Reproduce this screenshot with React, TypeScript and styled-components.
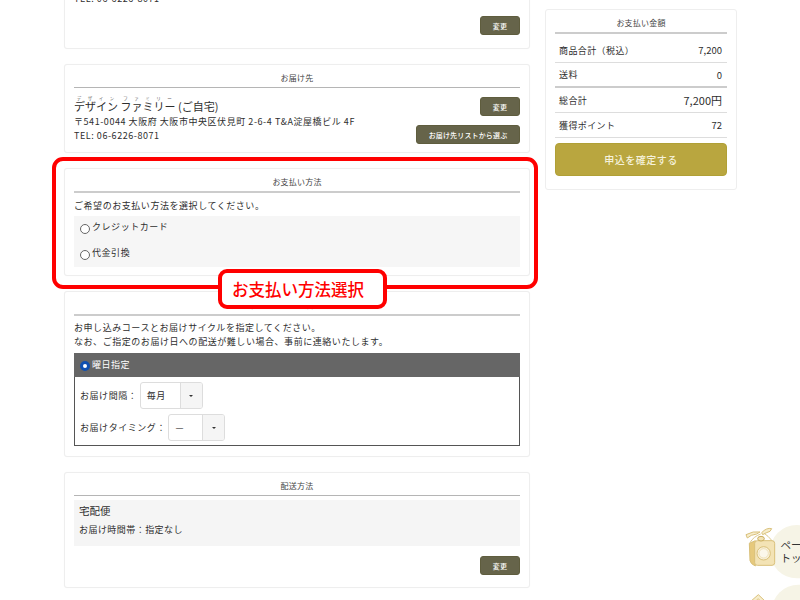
import React from "react";
import styled, { createGlobalStyle } from "styled-components";

const Global = createGlobalStyle`
  html, body { margin: 0; padding: 0; background: #fff; }
  body { font-family: "Noto Sans CJK JP", "Noto Sans", sans-serif; color: #333; overflow: hidden; }
`;

const Page = styled.div`
  position: relative;
  width: 800px;
  height: 600px;
  overflow: hidden;
`;

const Layout = styled.div`
  display: flex;
  align-items: flex-start;
  gap: 15px;
  padding-left: 64px;
  margin-top: -60px;
`;

const MainColumn = styled.div`
  width: 466px;
  display: flex;
  flex-direction: column;
  gap: 15px;
`;

const SideColumn = styled.div`
  width: 192px;
  margin-top: 69px;
`;

const Card = styled.section<{ $h: number; $raised?: boolean }>`
  position: relative;
  z-index: ${(p) => (p.$raised ? 2 : 1)};
  box-sizing: border-box;
  height: ${(p) => p.$h}px;
  padding: 0 9px;
  background: #fff;
  border: 1px solid #eee;
  border-radius: 3px;
  box-shadow: 0 0 1px rgba(0, 0, 0, 0.05);
`;

const CardTitle = styled.h2<{ $thin?: boolean }>`
  margin: 0 0 4px;
  height: 22px;
  line-height: 26px;
  font-size: 8px;
  font-weight: 400;
  letter-spacing: 0.2px;
  text-align: center;
  color: #444;
  border-bottom: ${(p) => (p.$thin ? "1px solid #b5b5b5" : "2px solid #ccc")};
`;

const Text = styled.p`
  margin: 0;
  font-size: 9px;
  line-height: 14px;
  letter-spacing: 0.55px;
  color: #2e2e2e;
`;

const Btn = styled.button<{ $wide?: boolean }>`
  display: block;
  width: ${(p) => (p.$wide ? 104 : 40)}px;
  height: 19px;
  padding: 0;
  border: 1px solid #5f5d3e;
  border-radius: 3px;
  background: #66644a;
  color: #fff;
  font-family: inherit;
  font-size: 7px;
  font-weight: 500;
  letter-spacing: 0.15px;
  white-space: nowrap;
`;

const BtnRow = styled.div`
  display: flex;
  justify-content: flex-end;
`;

const Spacer = styled.div<{ $h: number }>`
  height: ${(p) => p.$h}px;
`;

const AddressRow = styled.div`
  display: flex;
  justify-content: space-between;
`;

const Name = styled.div`
  font-size: 11px;
  line-height: 13px;
  margin: 4px 0 2px;
  color: #2e2e2e;
  ruby { ruby-position: over; }
  rt { font-size: 4.5px; letter-spacing: 1.1px; color: #666; }
`;

const AddressBtns = styled.div`
  display: flex;
  flex-direction: column;
  align-items: flex-end;
  gap: 9px;
  padding-top: 5px;
`;

const OptionBox = styled.div`
  margin-top: 3px;
  height: 51px;
  background: #f6f6f6;
`;

const Option = styled.label`
  display: flex;
  align-items: flex-start;
  gap: 2px;
  height: 26px;
  padding-left: 6px;
  font-size: 9px;
  line-height: 22px;
  letter-spacing: 0.55px;
  color: #2e2e2e;
`;

const Radio = styled.span`
  display: block;
  box-sizing: border-box;
  width: 10px;
  height: 10px;
  margin-top: 8px;
  border: 1px solid #666;
  border-radius: 50%;
  background: #fff;
`;

const RadioOn = styled.span`
  display: block;
  box-sizing: border-box;
  width: 10px;
  height: 10px;
  margin-top: 3px;
  border: 3px solid #0f4fb0;
  border-radius: 50%;
  background: #fff;
`;

const CycleBox = styled.div`
  margin-top: 4px;
  height: 93px;
  box-sizing: border-box;
  border: 1px solid #555;
  border-width: 0 1px 1px;
`;

const CycleHead = styled.div`
  display: flex;
  align-items: center;
  gap: 2px;
  box-sizing: border-box;
  height: 24px;
  margin: 0 -1px;
  padding: 0 0 1px 6px;
  background: #666;
  color: #fff;
  font-size: 9px;
  letter-spacing: 0.5px;
`;

const FieldRow = styled.div`
  display: flex;
  align-items: center;
  height: 27px;
  padding-left: 5px;
  margin-top: 5px;
  font-size: 9px;
  letter-spacing: 0.55px;
  color: #2e2e2e;
`;

const Select = styled.div<{ $w: number }>`
  box-sizing: border-box;
  width: ${(p) => p.$w}px;
  height: 27px;
  margin-left: 2.5px;
  display: flex;
  border: 1px solid #ddd;
  border-radius: 3px;
  overflow: hidden;
  background: #fff;
  font-size: 9px;
  line-height: 25px;
`;

const SelectValue = styled.span`
  flex: 1;
  padding-left: 6px;
`;

const SelectArrow = styled.span`
  width: 21px;
  display: flex;
  align-items: center;
  justify-content: center;
  background: #f5f5f5;
  border-left: 1px solid #ddd;
  &::after {
    content: "";
    border: 2px solid transparent;
    border-top: 2.5px solid #333;
    border-bottom: 0;
  }
`;

const ShippingBox = styled.div`
  height: 46px;
  padding: 3px 5px 0;
  box-sizing: border-box;
  background: #f5f5f5;
`;

const ShippingName = styled.div`
  font-size: 10.5px;
  line-height: 15px;
  color: #2e2e2e;
`;

const ShippingNote = styled.div`
  margin-top: 5px;
  font-size: 9px;
  line-height: 14px;
  letter-spacing: 0.45px;
  color: #2e2e2e;
`;

const SideCard = styled.aside`
  box-sizing: border-box;
  height: 181px;
  padding: 0 9px;
  border: 1px solid #eee;
  border-radius: 3px;
  background: #fff;
`;

const SumRow = styled.div<{ $big?: boolean }>`
  display: flex;
  justify-content: space-between;
  align-items: center;
  height: 25px;
  box-sizing: border-box;
  padding: 0 5px 0 4px;
  border-bottom: ${(p) => (p.$big ? "2px solid #ccc" : "1px solid #ddd")};
  font-size: 9px;
  letter-spacing: 0.4px;
  color: #2e2e2e;
`;

const SumValue = styled.span<{ $big?: boolean }>`
  font-size: ${(p) => (p.$big ? 11 : 9.5)}px;
  letter-spacing: 0;
`;

const Confirm = styled.button`
  display: block;
  width: 172px;
  height: 33px;
  margin-top: 5px;
  padding: 0;
  border: 1px solid #b0a036;
  border-radius: 4px;
  background: #b9a63f;
  color: #f5f2dc;
  font-family: inherit;
  font-size: 10px;
  font-weight: 500;
  letter-spacing: 0.5px;
`;

const Highlight = styled.div`
  position: absolute;
  left: -13px;
  top: -12px;
  width: 486px;
  height: 132px;
  box-sizing: border-box;
  border: 4px solid #f00;
  border-radius: 11px;
  pointer-events: none;
`;

const HighlightLabel = styled.div`
  position: absolute;
  left: 153px;
  top: 100px;
  box-sizing: border-box;
  width: 169px;
  height: 40px;
  padding-right: 9px;
  border: 4px solid #f00;
  border-radius: 9px;
  background: #fff;
  color: #f00;
  font-size: 16.5px;
  font-weight: 500;
  line-height: 32px;
  text-align: center;
  white-space: nowrap;
`;

const FloatLink = styled.div<{ $top: number }>`
  position: absolute;
  left: 730px;
  top: ${(p) => p.$top}px;
  width: 70px;
  height: 90px;
`;

const FloatText = styled.div`
  position: absolute;
  left: 50.5px;
  top: 28px;
  font-size: 10.5px;
  line-height: 13px;
  color: #333;
  white-space: nowrap;
`;

const Bag = () => (
  <svg width="70" height="90" viewBox="0 0 210 270" fill="none">
    <circle cx="200" cy="125" r="80" fill="#f6f4e6" />
    <path d="M60 98 Q70 80 92 72 M126 92 Q115 78 100 68" stroke="#dcc98e" strokeWidth="3" />
    <path d="M48 74 Q70 62 90 66 L80 72 Q62 74 52 84 Z" fill="#f7edcb" stroke="#d9c07a" strokeWidth="3" />
    <path d="M95 68 Q110 52 125 56 L120 64 Q108 68 98 74 Z" fill="#f7edcb" stroke="#d9c07a" strokeWidth="3" />
    <path d="M58 100 L76 92 L76 168 Q62 162 60 152 Z" fill="#e6c97c" stroke="#d9c07a" strokeWidth="3" />
    <rect x="74" y="92" width="60" height="74" rx="8" fill="#f3e3b5" stroke="#d9c07a" strokeWidth="3" />
    <circle cx="101" cy="130" r="20" fill="#f9f1da" stroke="#d9c07a" strokeWidth="3" />
    <circle cx="101" cy="130" r="14" fill="#fbf7ea" stroke="#e8d8a8" strokeWidth="2" />
    <ellipse cx="93" cy="86" rx="10" ry="7" fill="#f3e3b5" stroke="#c9ad5e" strokeWidth="3" />
  </svg>
);

const House = () => (
  <svg width="70" height="90" viewBox="0 0 210 270" fill="none">
    <circle cx="205" cy="100" r="80" fill="#f6f4e6" />
    <path d="M60 72 L85 50 L108 72" fill="#f7edcb" stroke="#d9c07a" strokeWidth="3" />
    <path d="M70 75 L85 62 L98 75 Z" fill="#f3e3b5" stroke="#d9c07a" strokeWidth="2" />
  </svg>
);

export default function App() {
  return (
    <Page>
      <Global />
      <Layout>
        <MainColumn>
          <Card $h={109}>
            <Spacer $h={51} />
            <Text>TEL: 06-6226-8071</Text>
            <Spacer $h={10} />
            <BtnRow>
              <Btn>変更</Btn>
            </BtnRow>
          </Card>
          <Card $h={89}>
            <CardTitle $thin>お届け先</CardTitle>
            <AddressRow>
              <div>
                <Name>
                  <ruby>
                    デザイン<rt>デザイン</rt>
                  </ruby>{" "}
                  <ruby>
                    ファミリー<rt>ファミリー</rt>
                  </ruby>{" "}
                  (ご自宅)
                </Name>
                <Text>〒541-0044 大阪府 大阪市中央区伏見町 2-6-4 T&amp;A淀屋橋ビル 4F</Text>
                <Text>TEL: 06-6226-8071</Text>
              </div>
              <AddressBtns>
                <Btn>変更</Btn>
                <Btn $wide>お届け先リストから選ぶ</Btn>
              </AddressBtns>
            </AddressRow>
          </Card>
          <Card $h={108} $raised>
            <CardTitle>お支払い方法</CardTitle>
            <Spacer $h={2} />
            <Text>ご希望のお支払い方法を選択してください。</Text>
            <OptionBox>
              <Option>
                <Radio />
                クレジットカード
              </Option>
              <Option>
                <Radio />
                代金引換
              </Option>
            </OptionBox>
            <Highlight />
            <HighlightLabel>お支払い方法選択</HighlightLabel>
          </Card>
          <Card $h={166}>
            <CardTitle>お申込コースとお届けサイクル</CardTitle>
            <Spacer $h={1} />
            <Text>お申し込みコースとお届けサイクルを指定してください。</Text>
            <Text>なお、ご指定のお届け日への配送が難しい場合、事前に連絡いたします。</Text>
            <CycleBox>
              <CycleHead>
                <RadioOn />
                曜日指定
              </CycleHead>
              <FieldRow>
                お届け間隔：
                <Select $w={63}>
                  <SelectValue>毎月</SelectValue>
                  <SelectArrow />
                </Select>
              </FieldRow>
              <FieldRow>
                お届けタイミング：
                <Select $w={57}>
                  <SelectValue>—</SelectValue>
                  <SelectArrow />
                </Select>
              </FieldRow>
            </CycleBox>
          </Card>
          <Card $h={116}>
            <CardTitle $thin>配送方法</CardTitle>
            <ShippingBox>
              <ShippingName>宅配便</ShippingName>
              <ShippingNote>お届け時間帯：指定なし</ShippingNote>
            </ShippingBox>
            <Spacer $h={10} />
            <BtnRow>
              <Btn>変更</Btn>
            </BtnRow>
          </Card>
        </MainColumn>
        <SideColumn>
          <SideCard>
            <CardTitle>お支払い金額</CardTitle>
            <SumRow>
              商品合計（税込）<SumValue>7,200</SumValue>
            </SumRow>
            <SumRow $big>
              送料<SumValue>0</SumValue>
            </SumRow>
            <SumRow>
              総合計<SumValue $big>7,200円</SumValue>
            </SumRow>
            <SumRow>
              獲得ポイント<SumValue>72</SumValue>
            </SumRow>
            <Confirm>申込を確定する</Confirm>
          </SideCard>
        </SideColumn>
      </Layout>
      <FloatLink $top={510}>
        <Bag />
        <FloatText>
          ページ
          <br />
          トップ
        </FloatText>
      </FloatLink>
      <FloatLink $top={578}>
        <House />
      </FloatLink>
    </Page>
  );
}
